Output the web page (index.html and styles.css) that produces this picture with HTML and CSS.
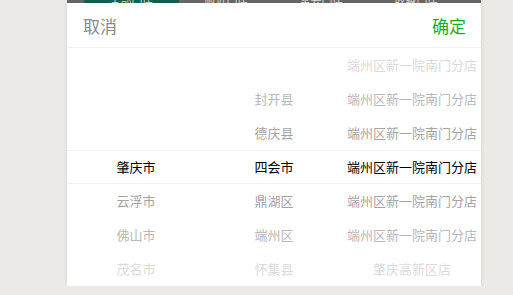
FILE: index.html
```
<!DOCTYPE html>
<html>
  <head>
    <title>选择门店</title>
    <link rel="stylesheet" href="styles.css">
  </head>
  <body>
    <div class="sheet">
      <!-- tabs of the page underneath, mostly hidden -->
      <div class="tabbar">
        <span class="tab tab-active">全部门店</span>
        <span class="tab">附近门店</span>
        <span class="tab">常去门店</span>
        <span class="tab">收藏门店</span>
      </div>
      <div class="picker-head">
        <span class="btn-cancel">取消</span>
        <span class="btn-ok">确定</span>
      </div>
      <div class="picker-body">
        <div class="col">
          <div class="row off3"></div>
          <div class="row off2"></div>
          <div class="row off1"></div>
          <div class="row selected">肇庆市</div>
          <div class="row off1">云浮市</div>
          <div class="row off2">佛山市</div>
          <div class="row off3">茂名市</div>
        </div>
        <div class="col">
          <div class="row off3"></div>
          <div class="row off2">封开县</div>
          <div class="row off1">德庆县</div>
          <div class="row selected">四会市</div>
          <div class="row off1">鼎湖区</div>
          <div class="row off2">端州区</div>
          <div class="row off3">怀集县</div>
        </div>
        <div class="col">
          <div class="row off3">端州区新一院南门分店</div>
          <div class="row off2">端州区新一院南门分店</div>
          <div class="row off1">端州区新一院南门分店</div>
          <div class="row selected">端州区新一院南门分店</div>
          <div class="row off1">端州区新一院南门分店</div>
          <div class="row off2">端州区新一院南门分店</div>
          <div class="row off3">肇庆高新区店</div>
        </div>
      </div>
    </div>
  </body>
</html>
```
FILE: styles.css
```
body {
  margin: 0;
  background: #ebeae6;
  font-family: "Noto Sans CJK SC", "Noto Sans", sans-serif;
}
.sheet {
  margin-left: 67px;
  width: 414px;
  background: #fff;
  box-shadow: 0 1px 4px rgba(0, 0, 0, 0.12);
}
.tabbar {
  display: flex;
  height: 3px;
  overflow: hidden;
  background: #666;
  padding-left: 17px;
  font-size: 11px;
  line-height: 0;
  color: #ddd;
}
.tab {
  width: 95px;
  text-align: center;
}
.tab-active {
  background: #135e50;
}
.picker-head {
  display: flex;
  justify-content: space-between;
  align-items: center;
  height: 44px;
  padding: 0 15px 0 16px;
  border-bottom: 1px solid #f0f0f0;
  font-size: 17px;
}
.btn-cancel {
  color: #888;
}
.btn-ok {
  color: #1aad19;
}
.picker-body {
  display: flex;
}
.col {
  flex: 1;
}
.row {
  height: 34px;
  line-height: 34px;
  text-align: center;
  font-size: 13px;
  white-space: nowrap;
}
.selected {
  color: #000;
  border-top: 1px solid #f0f0f0;
  border-bottom: 1px solid #f0f0f0;
  height: 32px;
  line-height: 32px;
}
.off1 {
  color: #a4a4a4;
}
.off2 {
  color: #b8b8b8;
}
.off3 {
  color: #dadada;
}
```
